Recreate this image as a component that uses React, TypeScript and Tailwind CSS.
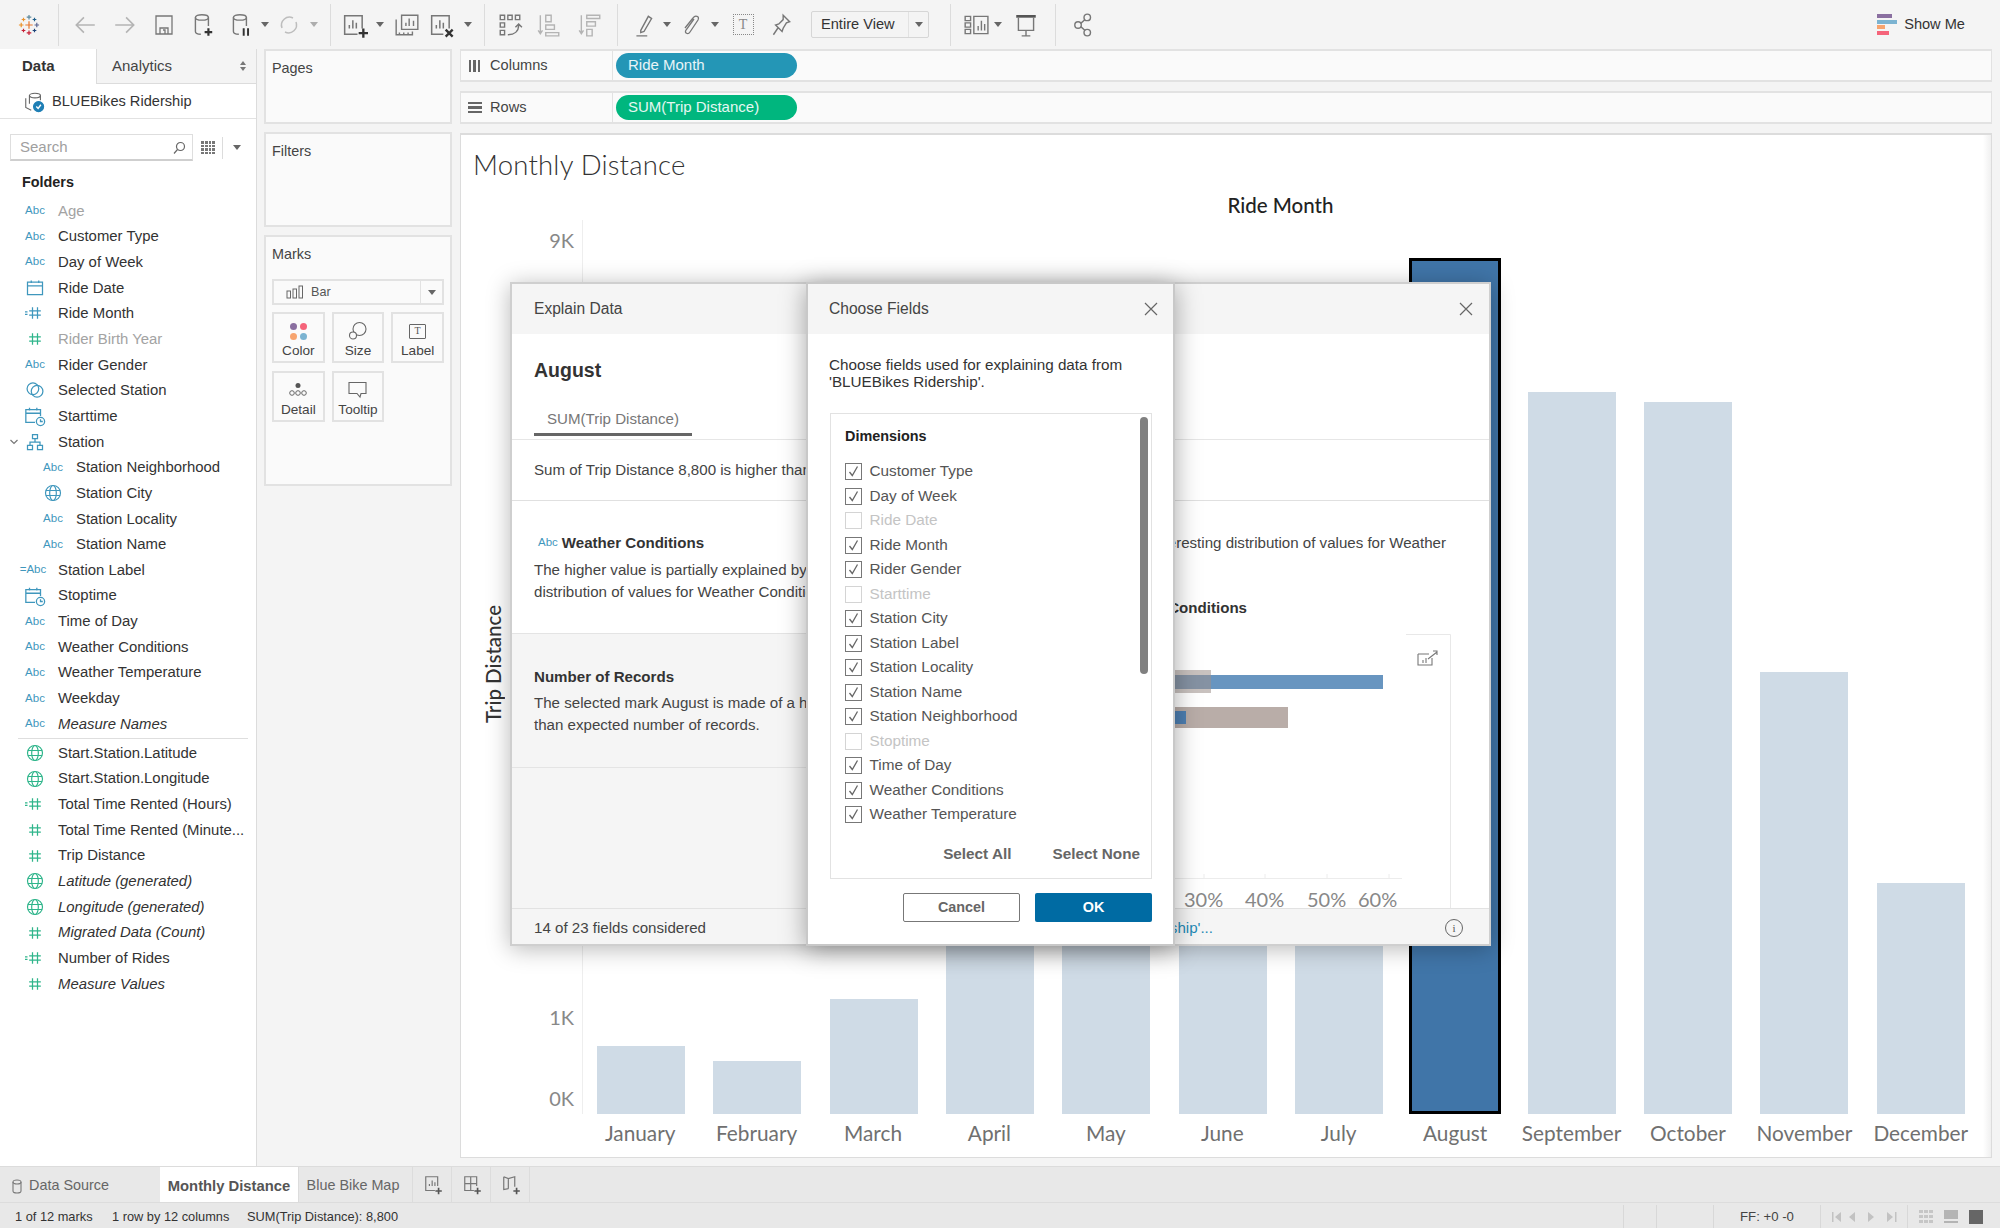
import React from 'react';

const BLUE = '#3f97bd';
const GREEN = '#2fb58b';

type Kind = 'abc' | 'eqabc' | 'cal' | 'hash' | 'eqhash' | 'set' | 'datetime' | 'hier' | 'globe';
type Field = { name: string; kind: Kind; color?: string; muted?: boolean; italic?: boolean; nested?: boolean; chevron?: boolean };

const dims: Field[] = [
  { name: 'Age', kind: 'abc', muted: true },
  { name: 'Customer Type', kind: 'abc' },
  { name: 'Day of Week', kind: 'abc' },
  { name: 'Ride Date', kind: 'cal' },
  { name: 'Ride Month', kind: 'eqhash', color: BLUE },
  { name: 'Rider Birth Year', kind: 'hash', color: GREEN, muted: true },
  { name: 'Rider Gender', kind: 'abc' },
  { name: 'Selected Station', kind: 'set' },
  { name: 'Starttime', kind: 'datetime' },
  { name: 'Station', kind: 'hier', chevron: true },
  { name: 'Station Neighborhood', kind: 'abc', nested: true },
  { name: 'Station City', kind: 'globe', color: BLUE, nested: true },
  { name: 'Station Locality', kind: 'abc', nested: true },
  { name: 'Station Name', kind: 'abc', nested: true },
  { name: 'Station Label', kind: 'eqabc' },
  { name: 'Stoptime', kind: 'datetime' },
  { name: 'Time of Day', kind: 'abc' },
  { name: 'Weather Conditions', kind: 'abc' },
  { name: 'Weather Temperature', kind: 'abc' },
  { name: 'Weekday', kind: 'abc' },
  { name: 'Measure Names', kind: 'abc', italic: true },
];

const measures: Field[] = [
  { name: 'Start.Station.Latitude', kind: 'globe', color: GREEN },
  { name: 'Start.Station.Longitude', kind: 'globe', color: GREEN },
  { name: 'Total Time Rented (Hours)', kind: 'eqhash', color: GREEN },
  { name: 'Total Time Rented (Minute...', kind: 'hash', color: GREEN },
  { name: 'Trip Distance', kind: 'hash', color: GREEN },
  { name: 'Latitude (generated)', kind: 'globe', color: GREEN, italic: true },
  { name: 'Longitude (generated)', kind: 'globe', color: GREEN, italic: true },
  { name: 'Migrated Data (Count)', kind: 'hash', color: GREEN, italic: true },
  { name: 'Number of Rides', kind: 'eqhash', color: GREEN },
  { name: 'Measure Values', kind: 'hash', color: GREEN, italic: true },
];

const months = [
  { m: 'January', h: 68 },
  { m: 'February', h: 53 },
  { m: 'March', h: 115 },
  { m: 'April', h: 420 },
  { m: 'May', h: 470 },
  { m: 'June', h: 520 },
  { m: 'July', h: 560 },
  { m: 'August', h: 856, selected: true },
  { m: 'September', h: 722 },
  { m: 'October', h: 712 },
  { m: 'November', h: 442 },
  { m: 'December', h: 231 },
];

const choose = [
  ['Customer Type', true],
  ['Day of Week', true],
  ['Ride Date', false],
  ['Ride Month', true],
  ['Rider Gender', true],
  ['Starttime', false],
  ['Station City', true],
  ['Station Label', true],
  ['Station Locality', true],
  ['Station Name', true],
  ['Station Neighborhood', true],
  ['Stoptime', false],
  ['Time of Day', true],
  ['Weather Conditions', true],
  ['Weather Temperature', true],
] as [string, boolean][];

function Svg({ children, size = 24, color = '#777', sw = 1.3 }: { children: React.ReactNode; size?: number; color?: string; sw?: number }) {
  return (
    <svg className="shrink-0" width={size} height={size} viewBox="0 0 24 24" fill="none" stroke={color} strokeWidth={sw}>
      {children}
    </svg>
  );
}

function FieldIcon({ kind, color = BLUE }: { kind: Kind; color?: string }) {
  if (kind === 'abc') return <span className="text-[11.5px] text-[#3f97bd] leading-none">Abc</span>;
  if (kind === 'eqabc') return <span className="text-[11.5px] text-[#3f97bd] leading-none -ml-1">=Abc</span>;
  if (kind === 'hash' || kind === 'eqhash')
    return (
      <Svg size={20} color={color} sw={1.5}>
        <path d="M9 5v14M15 5v14M5 9.500h14M5 14.500h14" />
        {kind === 'eqhash' && <path d="M-3 10.500h4M-3 13.500h4" style={{ transform: 'translateX(2px)' }} />}
      </Svg>
    );
  if (kind === 'cal')
    return (
      <Svg size={20} color={color} sw={1.5}>
        <path d="M3 5h18v15H3zM3 9.500h18M7.500 3v3M16.500 3v3" />
      </Svg>
    );
  if (kind === 'datetime')
    return (
      <Svg size={22} color={color} sw={1.4}>
        <path d="M12 19H2V5h16v7M2 9h16M6 3v3M14 3v3" />
        <circle cx="18" cy="18" r="4.500" />
        <path d="M18 15.500V18h2.500" />
      </Svg>
    );
  if (kind === 'set')
    return (
      <Svg size={20} color={color} sw={1.5}>
        <circle cx="9.500" cy="10.500" r="7" />
        <circle cx="14.500" cy="13.500" r="7" />
      </Svg>
    );
  if (kind === 'hier')
    return (
      <Svg size={20} color={color} sw={1.5}>
        <path d="M9 3h6v5H9zM3 16h6v5H3zM15 16h6v5h-6zM12 8v4M6 16v-4h12v4" />
      </Svg>
    );
  return (
    <Svg size={20} color={color} sw={1.4}>
      <circle cx="12" cy="12" r="9" />
      <ellipse cx="12" cy="12" rx="4" ry="9" />
      <path d="M3.500 9h17M3.500 15h17" />
    </Svg>
  );
}

function FieldRow({ f }: { f: Field }) {
  return (
    <div className={`flex items-center h-[25.67px] relative ${f.muted ? 'text-[#a3a3a3]' : 'text-[#333]'} ${f.italic ? 'italic' : ''}`}>
      {f.chevron && (
        <svg className="absolute left-[9px] top-[9px]" width="10" height="8" viewBox="0 0 10 8" fill="none" stroke="#777" strokeWidth="1.200">
          <path d="M1.500 2l3.500 3.500L8.500 2" />
        </svg>
      )}
      <div className={`flex justify-center shrink-0 not-italic ${f.nested ? 'w-[24px] ml-[41px] mr-[11px]' : 'w-[24px] ml-[23px] mr-[11px]'}`}>
        <FieldIcon kind={f.kind} color={f.color} />
      </div>
      <span className="whitespace-nowrap text-[14.9px]">{f.name}</span>
    </div>
  );
}

function Caret({ cls = '' }: { cls?: string }) {
  return <span className={`inline-block shrink-0 w-0 h-0 border-x-[4px] border-x-transparent border-t-[5px] border-t-[#666] ${cls}`} />;
}

function TBtn({ w, children }: { w: number; children: React.ReactNode }) {
  return (
    <div className="flex items-center justify-center shrink-0 h-full" style={{ width: w }}>
      {children}
    </div>
  );
}

function Gap({ w }: { w: number }) {
  return <div className="shrink-0" style={{ width: w }} />;
}

function Sep() {
  return <div className="w-px h-[42px] bg-[#dcdcdc] shrink-0" />;
}

function TableauLogo() {
  const plus = (x: number, y: number, r: number, c: string, k: string) => (
    <path key={k} d={`M${x - r} ${y}h${2 * r}M${x} ${y - r}v${2 * r}`} stroke={c} strokeWidth="1.300" />
  );
  return (
    <svg width="22" height="22" viewBox="0 0 24 24" fill="none">
      {plus(12, 12, 4, '#e8762c', 'c')}
      {plus(12, 3.5, 2.5, '#5b879b', 't')}
      {plus(12, 20.5, 2.5, '#c72035', 'b')}
      {plus(3.5, 12, 2.5, '#eb912b', 'l')}
      {plus(20.5, 12, 2.5, '#5b6591', 'r')}
      {plus(6, 6, 2, '#eb912b', 'a')}
      {plus(18, 6, 2, '#1f5f8b', 'e')}
      {plus(6, 18, 2, '#c72035', 'f')}
      {plus(18, 18, 2, '#1f447a', 'g')}
    </svg>
  );
}

function Toolbar() {
  return (
    <div className="flex items-center h-[49px] bg-[#f4f4f4] pl-[14px] relative">
      <TBtn w={30}><TableauLogo /></TBtn>
      <Gap w={14} />
      <Sep />
      <Gap w={6} />
      <TBtn w={40}>
        <Svg size={26} color="#b4b4b4" sw={1.500}><path d="M21 12H4M11 5l-7 7 7 7" /></Svg>
      </TBtn>
      <TBtn w={40}>
        <Svg size={26} color="#b4b4b4" sw={1.500}><path d="M3 12h17M13 5l7 7-7 7" /></Svg>
      </TBtn>
      <TBtn w={38}>
        <Svg size={24}><path d="M4 3h16v18H4zM8 21v-6h8v6M11 17h2v4" /></Svg>
      </TBtn>
      <TBtn w={39}>
        <Svg size={26}>
          <ellipse cx="11" cy="5" rx="6" ry="2.500" />
          <path d="M5 5v13c0 1.500 2 2.500 5 2.500M17 5v8" />
          <path d="M17 15v7M13.500 18.500h7" stroke="#333" strokeWidth="2" />
        </Svg>
      </TBtn>
      <TBtn w={37}>
        <Svg size={26}>
          <ellipse cx="11" cy="5" rx="6" ry="2.500" />
          <path d="M5 5v13c0 1.500 2 2.500 5 2.500M17 5v8" />
          <path d="M14.500 15v7M18.500 15v7" stroke="#333" strokeWidth="1.800" />
        </Svg>
      </TBtn>
      <TBtn w={12}><Caret /></TBtn>
      <TBtn w={36}>
        <Svg size={24} color="#bdbdbd" sw={1.500}>
          <path d="M5 15a8 8 0 0 1 11-10M19 9a8 8 0 0 1-11 10" />
        </Svg>
      </TBtn>
      <TBtn w={14}><Caret cls="opacity-50" /></TBtn>
      <Gap w={9} />
      <Sep />
      <Gap w={6} />
      <TBtn w={34}>
        <Svg size={28}>
          <path d="M15 20H4V4h15v11M8 15v-3M11 15V8M14 15v-5" />
          <path d="M20 15v8M16 19h8" stroke="#333" strokeWidth="2" />
        </Svg>
      </TBtn>
      <TBtn w={18}><Caret /></TBtn>
      <TBtn w={36}>
        <Svg size={26}>
          <path d="M7 16V3h15v13zM2 7v14h15v-3M11 13v-3M14 13V6M18 13V8M5 19v2M9 19v2M13 19v2" />
        </Svg>
      </TBtn>
      <TBtn w={32}>
        <Svg size={28}>
          <path d="M14 20H4V4h15v11M8 15v-3M11 15V8M14 15v-5" />
          <path d="M16 16l6 6M22 16l-6 6" stroke="#333" strokeWidth="2" />
        </Svg>
      </TBtn>
      <TBtn w={22}><Caret /></TBtn>
      <Gap w={5} />
      <Sep />
      <TBtn w={50}>
        <Svg size={26}>
          <path d="M3 3h4v4H3zM10 3h4v4h-4zM17 3h4v4h-4zM3 10h4v4H3zM3 17h4v4H3zM10 21c6 0 10-3 10-9M17 14l3-3 3 3" />
        </Svg>
      </TBtn>
      <TBtn w={28}>
        <Svg size={26} color="#b4b4b4">
          <path d="M4 3v17M2 17l2 3 2-3M9 3h5v6H9zM9 12h8v4H9zM9 19h12v3H9z" />
        </Svg>
      </TBtn>
      <TBtn w={54}>
        <Svg size={26} color="#b4b4b4">
          <path d="M4 3v17M2 17l2 3 2-3M9 3h12v3H9zM9 9h8v4H9zM9 16h5v6H9z" />
        </Svg>
      </TBtn>
      <Sep />
      <Gap w={10} />
      <TBtn w={32}>
        <Svg size={26}>
          <path d="M9 17L16 4l3 2-7 12-3 1zM5 22h10" />
        </Svg>
      </TBtn>
      <Gap w={4} />
      <TBtn w={6}><Caret /></TBtn>
      <Gap w={2} />
      <TBtn w={36}>
        <Svg size={24}>
          <path d="M16 6l-8 11c-2 3 2 5 4 2l8-12c2-4-3-5-5-2L7 15" />
        </Svg>
      </TBtn>
      <Gap w={4} />
      <TBtn w={6}><Caret /></TBtn>
      <TBtn w={50}>
        <div className="w-[21px] h-[21px] border border-dotted border-[#888] flex items-center justify-center text-[14px] text-[#888] font-['Liberation_Serif',serif] leading-none">T</div>
      </TBtn>
      <TBtn w={26}>
        <Svg size={26}>
          <path d="M14 3l6 6-3 1-3 5-1 3-6-6 3-1 4-4zM9 15l-4 6" />
        </Svg>
      </TBtn>
      <Gap w={17} />
      <div className="w-[118px] h-[27px] border border-[#d6d6d6] rounded-[2px] flex items-center text-[14.6px] text-[#333] shrink-0">
        <span className="w-[96px] pl-[9px] whitespace-nowrap">Entire View</span>
        <div className="flex-1 flex items-center justify-center h-full border-l border-[#e2e2e2]"><Caret /></div>
      </div>
      <Gap w={21} />
      <Sep />
      <Gap w={10} />
      <TBtn w={30}>
        <Svg size={26}>
          <path d="M2 4h5v4H2zM2 10h5v4H2zM2 16h5v4H2zM10 4h13v16H10zM14 17v-4M17 17V8M20 17v-6" />
        </Svg>
      </TBtn>
      <TBtn w={14}><Caret /></TBtn>
      <Gap w={2} />
      <TBtn w={38}>
        <Svg size={26}>
          <path d="M3 4h18" stroke="#555" strokeWidth="2.500" />
          <path d="M5 5v12h14V5M12 17v5M8 22h8" />
        </Svg>
      </TBtn>
      <Gap w={10} />
      <Sep />
      <Gap w={15} />
      <TBtn w={26}>
        <Svg size={26}>
          <circle cx="6.500" cy="12" r="3" />
          <circle cx="15" cy="5" r="3" />
          <circle cx="15" cy="19" r="3" />
          <path d="M9 10.500l4-3.500M9 13.500l4 3.500" />
        </Svg>
      </TBtn>
      <div className="ml-auto mr-[35px] flex items-center gap-[7px] text-[14.6px] text-[#333]">
        <div className="flex flex-col gap-[1.500px]">
          <div className="w-[15px] h-[4px] bg-[#8a6fa0]" />
          <div className="w-[20px] h-[4px] bg-[#7bb3d1]" />
          <div className="w-[8px] h-[4px] bg-[#f7a46f]" />
          <div className="w-[12px] h-[4px] bg-[#f5647a]" />
        </div>
        <span>Show Me</span>
      </div>
    </div>
  );
}

function DataPane() {
  return (
    <div className="w-[257px] shrink-0 bg-white border-r border-[#dcdcdc] flex flex-col">
      <div className="flex h-[35px] items-stretch text-[15px]">
        <div className="w-[96px] flex items-center pl-[22px] font-bold text-[#333]">Data</div>
        <div className="flex-1 flex items-center justify-between pl-[15px] pr-[10px] bg-[#f4f4f4] border-l border-b border-[#dcdcdc] text-[#444]">
          <span>Analytics</span>
          <span className="flex flex-col gap-[2px]">
            <span className="w-0 h-0 border-x-[3px] border-x-transparent border-b-[4px] border-b-[#777]" />
            <span className="w-0 h-0 border-x-[3px] border-x-transparent border-t-[4px] border-t-[#777]" />
          </span>
        </div>
      </div>
      <div className="h-[35px] flex items-center pl-[23px] pt-[2px] gap-[7px] border-b border-[#e2e2e2] text-[14.6px] text-[#333]">
        <svg width="22" height="22" viewBox="0 0 24 24" fill="none" stroke="#666" strokeWidth="1.200">
          <ellipse cx="13" cy="5" rx="6" ry="2.500" />
          <path d="M7 5v9M19 5v5M3 8v10l6 3" />
          <circle cx="17" cy="17" r="5.500" fill="#1f7fb5" stroke="#1f7fb5" />
          <path d="M14.500 17l2 2 3-4" stroke="#fff" strokeWidth="1.500" />
        </svg>
        <span>BLUEBikes Ridership</span>
      </div>
      <div className="flex items-center mt-[15px] ml-[10px]">
        <div className="w-[183px] h-[27px] border border-[#dedede] border-b-2 border-b-[#cfcfcf] flex items-center justify-between pl-[9px] pr-[6px] pt-[1px] text-[15px] text-[#a0a0a0]">
          <span>Search</span>
          <svg width="14" height="14" viewBox="0 0 14 14" fill="none" stroke="#666" strokeWidth="1.200">
            <circle cx="8.500" cy="5.500" r="4" />
            <path d="M5.500 8.500L2 12.500" />
          </svg>
        </div>
        <div className="ml-[8px] w-[14px] h-[13px] grid grid-cols-4 gap-px">
          {Array.from({ length: 16 }).map((_, i) => (
            <span key={i} className="bg-[#777]" />
          ))}
        </div>
        <div className="w-px h-[22px] bg-[#dcdcdc] ml-[7px]" />
        <Caret cls="ml-[10px]" />
      </div>
      <div className="h-[26px] mt-[9px] flex items-center pl-[22px] text-[14.4px] font-bold text-[#222]">Folders</div>
      <div className="mt-[2px]">
        {dims.map((f) => (
          <FieldRow key={f.name} f={f} />
        ))}
        <div className="h-px bg-[#dedede] mx-[18px] mt-[1px] mb-[1.400px] w-[230px]" />
        {measures.map((f) => (
          <FieldRow key={f.name} f={f} />
        ))}
      </div>
    </div>
  );
}

function MarkBtn({ label, children }: { label: string; children: React.ReactNode }) {
  return (
    <div className="h-[51px] border-2 border-[#e2e2e2] flex flex-col items-center pt-[5px] text-[13.6px] text-[#444]">
      <div className="h-[24px] flex items-center justify-center">{children}</div>
      <span className="leading-[16px]">{label}</span>
    </div>
  );
}

function Card({ h, title, children }: { h: number; title: string; children?: React.ReactNode }) {
  return (
    <div className="border-2 border-[#e2e2e2] bg-[#fafafa] px-[6px] shrink-0" style={{ height: h }}>
      <div className="h-[36px] flex items-center text-[14.4px] text-[#444]">{title}</div>
      {children}
    </div>
  );
}

function SidePanes() {
  return (
    <div className="w-[188px] shrink-0 ml-[7px] flex flex-col gap-[8px]">
      <Card h={75} title="Pages" />
      <Card h={95} title="Filters" />
      <Card h={251} title="Marks">
        <div className="h-[26px] mt-[6px] border-2 border-[#e2e2e2] flex items-center text-[12.6px] text-[#555]">
          <div className="flex-1 flex items-center pl-[12px] gap-[7px]">
            <svg width="18" height="14" viewBox="0 0 18 14" fill="none" stroke="#666" strokeWidth="1">
              <rect x="1" y="6" width="3.500" height="7" />
              <rect x="7" y="4" width="3.500" height="9" />
              <rect x="13" y="1" width="3.500" height="12" />
            </svg>
            <span>Bar</span>
          </div>
          <div className="w-[22px] h-full flex items-center justify-center border-l border-[#e2e2e2]"><Caret /></div>
        </div>
        <div className="grid grid-cols-3 gap-x-[7px] gap-y-[8px] mt-[7px]">
          <MarkBtn label="Color">
            <div className="grid grid-cols-2 gap-[3px]">
              <span className="w-[7px] h-[7px] rounded-full bg-[#8a6fa0]" />
              <span className="w-[7px] h-[7px] rounded-full bg-[#f5647a]" />
              <span className="w-[7px] h-[7px] rounded-full bg-[#f7a46f]" />
              <span className="w-[7px] h-[7px] rounded-full bg-[#7bb3d1]" />
            </div>
          </MarkBtn>
          <MarkBtn label="Size">
            <svg width="20" height="20" viewBox="0 0 20 20" fill="none" stroke="#666" strokeWidth="1.100">
              <circle cx="11.500" cy="8" r="6.500" />
              <circle cx="5" cy="14.500" r="3.500" fill="#fafafa" />
            </svg>
          </MarkBtn>
          <MarkBtn label="Label">
            <div className="w-[17px] h-[15px] border border-[#666] rounded-[1px] flex items-center justify-center text-[10px] leading-none text-[#555] font-['Liberation_Serif',serif]">T</div>
          </MarkBtn>
          <MarkBtn label="Detail">
            <svg width="18" height="16" viewBox="0 0 18 16" fill="none" stroke="#666" strokeWidth="1">
              <circle cx="9" cy="3.500" r="2.500" fill="#555" stroke="none" />
              <circle cx="3" cy="11" r="2.300" />
              <circle cx="9" cy="11" r="2.300" />
              <circle cx="15" cy="11" r="2.300" />
            </svg>
          </MarkBtn>
          <MarkBtn label="Tooltip">
            <svg width="19" height="18" viewBox="0 0 19 18" fill="none" stroke="#666" strokeWidth="1.100">
              <path d="M1 1.500h17v11h-5l-1 3.500-3-3.500H1z" />
            </svg>
          </MarkBtn>
        </div>
      </Card>
    </div>
  );
}

function Shelf({ label, pill, color, icon }: { label: string; pill: string; color: string; icon: React.ReactNode }) {
  return (
    <div className="h-[33px] flex border-y-2 border-x border-[#e2e2e2] bg-[#fafafa] items-stretch shrink-0">
      <div className="w-[152px] flex items-center pl-[6px] gap-[8px] border-r border-[#e2e2e2] text-[14.6px] text-[#444]">
        <div className="w-[15px] flex justify-center">{icon}</div>
        <span>{label}</span>
      </div>
      <div className="flex items-center pl-[3px]">
        <div className={`w-[181px] h-[25px] rounded-full flex items-center pl-[12px] text-[15px] text-white/90 ${color}`}>{pill}</div>
      </div>
    </div>
  );
}

function Chart() {
  return (
    <div className="flex-1 bg-white border border-[#dcdcdc] border-t-2 relative overflow-hidden font-['Lato',sans-serif] min-h-0">
      <div className="pl-[12px] pt-[14px] h-[47px] text-[27.5px] leading-[32px] font-light text-[#333] tracking-[0.2px]">Monthly Distance</div>
      <div className="h-[24px] mt-[11px] ml-[121px] w-[1397px] text-center text-[20.500px] leading-[24px] text-[#222] font-medium">Ride Month</div>
      <div className="ml-[121px] mt-[3px] w-[1397px] h-[894px] relative border-l border-[#eee]">
        <span className="absolute right-[calc(100%+9px)] top-[8px] text-[20px] leading-[24px] text-[#888]">9K</span>
        <span className="absolute right-[calc(100%+9px)] top-[785px] text-[20px] leading-[24px] text-[#888]">1K</span>
        <span className="absolute right-[calc(100%+9px)] top-[866px] text-[20px] leading-[24px] text-[#888]">0K</span>
        <div className="absolute right-[calc(100%+78px)] top-[385px] [writing-mode:vertical-rl] rotate-180 text-[20.500px] leading-[24px] text-[#333] font-medium whitespace-nowrap">Trip Distance</div>
        <div className="grid grid-cols-12 h-full items-end">
          {months.map((b) => (
            <div key={b.m} className="flex justify-center items-end h-full">
              <div
                className={b.selected ? 'w-[92px] bg-[#4075a8] border-[3px] border-black' : 'w-[88px] bg-[#cfdbe6]'}
                style={{ height: b.h }}
              />
            </div>
          ))}
        </div>
      </div>
      <div className="ml-[121px] w-[1397px] grid grid-cols-12 pt-[7px]">
        {months.map((b) => (
          <span key={b.m} className="text-center text-[20.8px] leading-[24px] text-[#707070]">{b.m}</span>
        ))}
      </div>
      <div className="absolute inset-y-0 right-0 w-[8px] bg-gradient-to-r from-transparent to-[#f0f0f0]" />
    </div>
  );
}

function CloseX({ size = 14 }: { size?: number }) {
  return (
    <svg width={size} height={size} viewBox="0 0 14 14" fill="none" stroke="#666" strokeWidth="1.200">
      <path d="M1 1l12 12M13 1L1 13" />
    </svg>
  );
}

function ExplainDialog() {
  return (
    <div className="absolute left-[510px] top-[282px] w-[981px] h-[664px] bg-white border-2 border-[#cfcfcf] shadow-[0_3px_22px_rgba(0,0,0,0.28)] flex flex-col text-[15.1px] text-[#444]">
      <div className="h-[50px] bg-[#f5f5f5] flex items-center justify-between pl-[22px] pr-[16px] shrink-0 text-[15.600px]">
        <span>Explain Data</span>
        <CloseX />
      </div>
      <div className="h-[106px] border-b border-[#e6e6e6] pl-[22px] shrink-0">
        <div className="text-[19.500px] font-bold text-[#333] leading-[24px] mt-[24px]">August</div>
        <div className="w-[158px] h-[54px] flex items-end pb-[2px] border-b-[3px] border-[#666] pl-[13px] text-[#777] leading-[24px] whitespace-nowrap">SUM(Trip Distance)</div>
      </div>
      <div className="h-[61px] border-b border-[#e0e0e0] pl-[22px] flex items-center shrink-0 whitespace-nowrap overflow-hidden">
        Sum of Trip Distance 8,800 is higher than expected
      </div>
      <div className="flex flex-1 min-h-0">
        <div className="w-[489px] bg-[#f5f5f5] flex flex-col overflow-hidden">
          <div className="h-[133px] bg-white border-b border-[#e4e4e4] pl-[22px] pt-[31px] shrink-0 whitespace-nowrap">
            <div className="flex items-center h-[22px] pl-[4px] gap-[4px] font-bold text-[#333]">
              <span className="text-[11.500px] font-normal text-[#3f97bd]">Abc</span>
              <span>Weather Conditions</span>
            </div>
            <div className="leading-[22px] mt-[5px]">The higher value is partially explained by</div>
            <div className="leading-[22px]">distribution of values for Weather Conditions</div>
          </div>
          <div className="h-[134px] border-b border-[#e4e4e4] pl-[22px] pt-[32px] shrink-0 whitespace-nowrap">
            <div className="h-[22px] font-bold text-[#333]">Number of Records</div>
            <div className="leading-[22px] mt-[4px]">The selected mark August is made of a higher</div>
            <div className="leading-[22px]">than expected number of records.</div>
          </div>
        </div>
        <div className="flex-1 overflow-hidden relative">
          <div className="pt-[31px] pr-[43px] text-right whitespace-nowrap leading-[22px]">There is an interesting distribution of values for Weather</div>
          <div className="w-[246px] mt-[43px] text-right font-bold text-[#333] leading-[22px]">Weather Conditions</div>
          <svg width="451" height="274" viewBox="0 0 451 274" fill="none" className="mt-[15px] -ml-[1px] block">
            <path d="M406 .5H450.500V274" stroke="#e8e8e8" />
            <rect x="0" y="41" width="383" height="14" fill="#6895c0" />
            <rect x="0" y="36" width="211" height="23" fill="#9d8f8a" opacity=".55" />
            <rect x="0" y="73" width="288" height="21" fill="#b9ada8" />
            <rect x="0" y="77" width="186" height="13" fill="#4e80b3" />
            <path d="M0 244.500H402M204 240v4M265 240v4M327 240v4M389 240v4" stroke="#ececec" />
            <path d="M418 20h11M418 20v11h14v-7M428 25l9-7M433 17h4v4M423 29v-3M426 29v-5" stroke="#777" strokeWidth="1.100" />
          </svg>
          <span className="absolute left-[183px] top-[386px] text-[20px] leading-[24px] text-[#888] font-['Lato',sans-serif]">30%</span>
          <span className="absolute left-[244px] top-[386px] text-[20px] leading-[24px] text-[#888] font-['Lato',sans-serif]">40%</span>
          <span className="absolute left-[306px] top-[386px] text-[20px] leading-[24px] text-[#888] font-['Lato',sans-serif]">50%</span>
          <span className="absolute left-[357px] top-[386px] text-[20px] leading-[24px] text-[#888] font-['Lato',sans-serif]">60%</span>
        </div>
      </div>
      <div className="h-[36px] bg-[#f5f5f5] border-t border-[#e2e2e2] flex items-center pl-[22px] pr-[26px] pt-[3px] shrink-0">
        <span className="w-[300px] whitespace-nowrap">14 of 23 fields considered</span>
        <span className="w-[379px] text-right whitespace-nowrap text-[#1f8ab5]">Choose fields from 'BLUEBikes Ridership'...</span>
        <div className="ml-auto w-[18px] h-[18px] border border-[#666] rounded-full flex items-center justify-center text-[11px] leading-none text-[#555] font-['Liberation_Serif',serif]">i</div>
      </div>
    </div>
  );
}

function ChooseDialog() {
  return (
    <div className="absolute left-[806px] top-[282px] w-[369px] h-[664px] bg-white border-2 border-[#c8c8c8] shadow-[0_4px_24px_rgba(0,0,0,0.35)] flex flex-col text-[#444]">
      <div className="h-[50px] bg-[#f5f5f5] flex items-center justify-between pl-[21px] pr-[15px] shrink-0 text-[15.600px]">
        <span>Choose Fields</span>
        <CloseX />
      </div>
      <div className="mt-[21.5px] pl-[21px] text-[15.25px] leading-[17px] text-[#333]">
        Choose fields used for explaining data from
        <br />
        'BLUEBikes Ridership'.
      </div>
      <div className="ml-[22px] w-[322px] h-[466px] mt-[23.5px] border border-[#e2e2e2] relative pl-[14px] shrink-0">
        <div className="absolute right-[3px] top-[3px] w-[8px] h-[257px] rounded-full bg-[#808080]" />
        <div className="h-[22px] mt-[12px] text-[14.400px] font-bold text-[#222] flex items-center">Dimensions</div>
        <div className="mt-[11.5px]">
          {choose.map(([name, on]) => (
            <div key={name} className={`h-[24.5px] flex items-center gap-[7.5px] text-[15.3px] ${on ? 'text-[#555]' : 'text-[#c4c4c4]'}`}>
              <div className={`w-[17px] h-[17px] border-[1.500px] flex items-center justify-center ${on ? 'border-[#777]' : 'border-[#d4d4d4]'}`}>
                {on && (
                  <svg width="13" height="13" viewBox="0 0 13 13" fill="none" stroke="#666" strokeWidth="1.300">
                    <path d="M2.500 7l2.800 3.500L10.500 1.500" />
                  </svg>
                )}
              </div>
              <span>{name}</span>
            </div>
          ))}
        </div>
        <div className="flex justify-end gap-[41px] pr-[11px] mt-[17.5px] text-[15.3px] font-bold text-[#666] leading-[17px]">
          <span>Select All</span>
          <span>Select None</span>
        </div>
      </div>
      <div className="flex justify-end gap-[15px] pr-[21px] mt-[14px] text-[14.400px] font-bold">
        <div className="w-[117px] h-[29px] border border-[#777] rounded-[2px] flex items-center justify-center text-[#666]">Cancel</div>
        <div className="w-[117px] h-[29px] bg-[#006ba3] rounded-[2px] flex items-center justify-center text-white">OK</div>
      </div>
    </div>
  );
}

function Bottom() {
  return (
    <>
      <div className="h-[37px] bg-[#e8e8e8] border-y border-[#dcdcdc] flex items-stretch text-[14.400px] text-[#666] shrink-0">
        <div className="w-[160px] flex items-center pl-[12px] pt-[3px] gap-[7px]">
          <svg width="10" height="15" viewBox="0 0 10 15" fill="none" stroke="#777" strokeWidth="1.100">
            <ellipse cx="5" cy="3" rx="4" ry="2" />
            <path d="M1 3v9c0 1 1.500 2 4 2s4-1 4-2V3" />
          </svg>
          <span>Data Source</span>
        </div>
        <div className="w-[138px] bg-white flex items-center justify-center pt-[3px] font-bold text-[14.8px] text-[#555] whitespace-nowrap">Monthly Distance</div>
        <div className="w-[115px] border-x border-[#dcdcdc] flex items-center justify-center pt-[3px] pr-[5px] whitespace-nowrap">Blue Bike Map</div>
        <div className="w-[39px] border-r border-[#dcdcdc] flex items-center justify-center pl-[4px]">
          <Svg size={22}>
            <path d="M13 18H3V3h13v10M7 13v-2M10 13V7M13 13V9" />
            <path d="M17 15v7M13.500 18.500h7" stroke="#555" strokeWidth="1.800" />
          </Svg>
        </div>
        <div className="w-[39px] border-r border-[#dcdcdc] flex items-center justify-center pl-[4px]">
          <Svg size={22}>
            <path d="M13 18H3V3h13v10M3 10.500h13M9.500 3v15" />
            <path d="M17 15v7M13.500 18.500h7" stroke="#555" strokeWidth="1.800" />
          </Svg>
        </div>
        <div className="w-[39px] border-r border-[#dcdcdc] flex items-center justify-center pl-[4px]">
          <Svg size={22}>
            <path d="M3 3l5 2 7-2v11M3 3v14l5-1M8 5v11" />
            <path d="M17 15v7M13.500 18.500h7" stroke="#555" strokeWidth="1.800" />
          </Svg>
        </div>
      </div>
      <div className="h-[25px] bg-[#e8e8e8] flex items-stretch pt-[2px] text-[12.800px] text-[#333] shrink-0">
        <span className="ml-[15px] w-[97px] flex items-center whitespace-nowrap">1 of 12 marks</span>
        <span className="w-[135px] flex items-center whitespace-nowrap">1 row by 12 columns</span>
        <span className="flex items-center whitespace-nowrap">SUM(Trip Distance): 8,800</span>
        <div className="ml-auto flex items-stretch">
          <div className="w-[33px] border-l border-[#d8d8d8]" />
          <div className="w-[57px] border-l border-[#d8d8d8]" />
          <div className="w-[107px] border-l border-[#d8d8d8] flex items-center justify-center text-[#444] text-[13.200px]">FF: +0 -0</div>
          <div className="w-[87px] border-l border-[#d8d8d8] flex items-center justify-center gap-[8px] pl-[4px]">
            <svg width="70" height="12" viewBox="0 0 70 12" fill="#c2c2c2">
              <path d="M1 1h1.500v10H1zM10 1v10L4 6zM24 1v10l-6-5zM37 1v10l6-5zM56 1v10l6-5zM64 1h1.500v10H64z" />
            </svg>
          </div>
          <div className="w-[93px] border-l border-[#d8d8d8] flex items-center pl-[11px] gap-[11px]">
            <div className="w-[14px] h-[13px] grid grid-cols-3 gap-[1.500px]">
              {Array.from({ length: 9 }).map((_, i) => (
                <span key={i} className="bg-[#c6c6c6]" />
              ))}
            </div>
            <div className="w-[14px] h-[13px] flex flex-col gap-[1.500px]">
              <div className="h-[9px] bg-[#b4b4b4]" />
              <div className="h-[2.500px] bg-[#b4b4b4]" />
            </div>
            <div className="w-[14px] h-[14px] bg-[#666]" />
          </div>
        </div>
      </div>
    </>
  );
}

export default function App() {
  return (
    <div className="w-[2000px] h-[1228px] relative overflow-hidden bg-[#f4f4f4] flex flex-col font-['Liberation_Sans',sans-serif]">
      <Toolbar />
      <div className="flex flex-1 min-h-0">
        <DataPane />
        <SidePanes />
        <div className="flex-1 min-w-0 ml-[8px] mr-[8px] mb-[8px] flex flex-col gap-[9px]">
          <Shelf
            label="Columns"
            pill="Ride Month"
            color="bg-[#2496b6]"
            icon={
              <span className="flex gap-[2px]">
                <span className="w-[2.500px] h-[12px] bg-[#666]" />
                <span className="w-[2.500px] h-[12px] bg-[#666]" />
                <span className="w-[2.500px] h-[12px] bg-[#666]" />
              </span>
            }
          />
          <Shelf
            label="Rows"
            pill="SUM(Trip Distance)"
            color="bg-[#00b67e]"
            icon={
              <span className="flex flex-col gap-[2px]">
                <span className="w-[14px] h-[2.500px] bg-[#666]" />
                <span className="w-[14px] h-[2.500px] bg-[#666]" />
                <span className="w-[14px] h-[2.500px] bg-[#666]" />
              </span>
            }
          />
          <Chart />
        </div>
      </div>
      <Bottom />
      <ExplainDialog />
      <ChooseDialog />
    </div>
  );
}
